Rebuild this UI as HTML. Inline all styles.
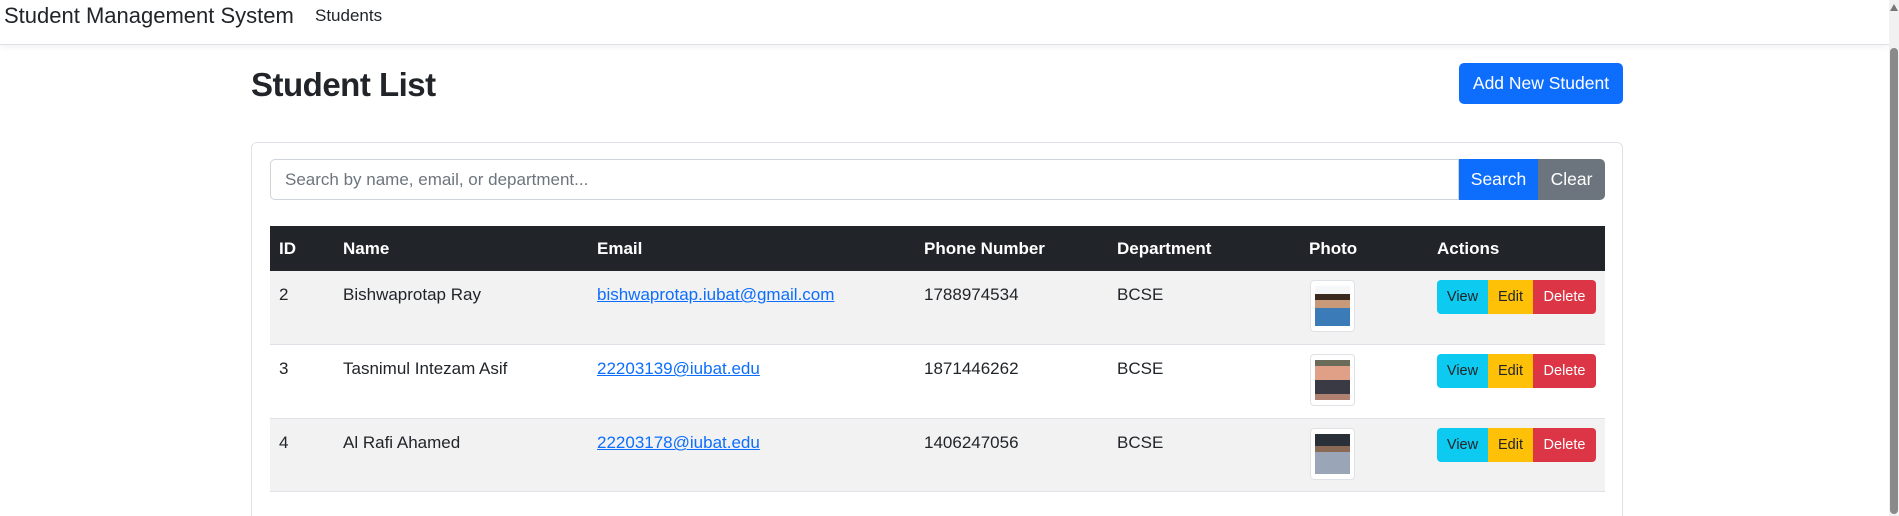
<!DOCTYPE html>
<html><head><meta charset="utf-8"><style>
*{box-sizing:border-box;margin:0;padding:0}
html{width:1899px;height:516px;overflow:hidden}
body{width:1899px;height:516px;overflow:hidden;background:#fff;font-family:"Liberation Sans",sans-serif;color:#212529;position:relative}
.nav{position:absolute;left:0;top:0;width:1889px;height:45px;border-bottom:1px solid #dee2e6;box-shadow:0 2px 6px rgba(0,0,0,.06)}
.brand{position:absolute;left:4px;top:3px;font-size:22px}
.link{position:absolute;left:315px;top:6px;font-size:17px}
h1{position:absolute;left:251px;top:66px;font-size:33px;font-weight:bold;letter-spacing:-0.5px}
.add{position:absolute;left:1459px;top:63px;width:164px;height:41px;background:#0d6efd;color:#fff;border-radius:5px;font-size:17.5px;text-align:center;line-height:41px}
.card{position:absolute;left:251px;top:142px;width:1372px;height:374px;border:1px solid #dee2e6;border-bottom:none;border-radius:6px 6px 0 0}
.inp{position:absolute;left:270px;top:159px;width:1189px;height:41px;border:1px solid #ced4da;border-radius:5px 0 0 5px;font-size:17px;color:#6c757d;padding-left:14px;line-height:39px}
.sb{position:absolute;top:159px;height:41px;color:#fff;font-size:17.5px;text-align:center;line-height:41px}
.thead{position:absolute;left:270px;top:226px;width:1335px;height:45px;background:#212529;color:#fff;font-weight:bold;font-size:17px}
.row{position:absolute;left:270px;width:1335px;border-bottom:1px solid #dee2e6;font-size:17px}
.c{position:absolute;top:14px}
.thead .c{top:13px}
a{color:#0d6efd;text-decoration:underline}
.ph{position:absolute;left:1040px;top:9px;width:45px;height:52px;border:1px solid #dee2e6;border-radius:4px;background:#fff;padding:5px 4px}
.ph div{width:100%;height:100%}
.btn{position:absolute;top:9px;height:34px;line-height:34px;font-size:14.5px;text-align:center}
.scroll{position:absolute;right:0;top:0;width:10px;height:516px;background:#f1f1f1}
.scroll .t{position:absolute;left:1px;top:48px;width:8px;height:466px;background:#8a8a8a;border-radius:4px}
</style></head><body>
<div class="nav"><span class="brand">Student Management System</span><span class="link">Students</span></div>
<h1>Student List</h1>
<div class="add">Add New Student</div>
<div class="card"></div>
<div class="inp">Search by name, email, or department...</div>
<div class="sb" style="left:1459px;width:79px;background:#0d6efd">Search</div>
<div class="sb" style="left:1538px;width:67px;background:#6c757d;border-radius:0 5px 5px 0">Clear</div>
<div class="thead"><span class="c" style="left:9px">ID</span><span class="c" style="left:73px">Name</span><span class="c" style="left:327px">Email</span><span class="c" style="left:654px">Phone Number</span><span class="c" style="left:847px">Department</span><span class="c" style="left:1039px">Photo</span><span class="c" style="left:1167px">Actions</span></div>

<div class="row" style="top:271px;height:74px;background:#f2f2f2"><span class="c" style="left:9px">2</span><span class="c" style="left:73px">Bishwaprotap Ray</span><span class="c" style="left:327px"><a>bishwaprotap.iubat@gmail.com</a></span><span class="c" style="left:654px">1788974534</span><span class="c" style="left:847px">BCSE</span>
<div class="ph"><div style="background:linear-gradient(#f5f7f8 0 20%,#3a2a20 20% 35%,#c99a7a 35% 55%,#3b7bb8 55%)"></div></div>
<div class="btn" style="left:1167px;width:51px;background:#0dcaf0;border-radius:4px 0 0 4px">View</div><div class="btn" style="left:1218px;width:45px;background:#ffc107">Edit</div><div class="btn" style="left:1263px;width:63px;background:#dc3545;color:#fff;border-radius:0 4px 4px 0">Delete</div></div>

<div class="row" style="top:345px;height:74px"><span class="c" style="left:9px">3</span><span class="c" style="left:73px">Tasnimul Intezam Asif</span><span class="c" style="left:327px"><a>22203139@iubat.edu</a></span><span class="c" style="left:654px">1871446262</span><span class="c" style="left:847px">BCSE</span>
<div class="ph"><div style="background:linear-gradient(#6b6b5a 0 15%,#e0a088 15% 50%,#3a3a45 50% 85%,#b08070 85%)"></div></div>
<div class="btn" style="left:1167px;width:51px;background:#0dcaf0;border-radius:4px 0 0 4px">View</div><div class="btn" style="left:1218px;width:45px;background:#ffc107">Edit</div><div class="btn" style="left:1263px;width:63px;background:#dc3545;color:#fff;border-radius:0 4px 4px 0">Delete</div></div>

<div class="row" style="top:419px;height:73px;background:#f2f2f2"><span class="c" style="left:9px">4</span><span class="c" style="left:73px">Al Rafi Ahamed</span><span class="c" style="left:327px"><a>22203178@iubat.edu</a></span><span class="c" style="left:654px">1406247056</span><span class="c" style="left:847px">BCSE</span>
<div class="ph"><div style="background:linear-gradient(#2a3038 0 30%,#8a6a55 30% 45%,#9aa5b8 45%)"></div></div>
<div class="btn" style="left:1167px;width:51px;background:#0dcaf0;border-radius:4px 0 0 4px">View</div><div class="btn" style="left:1218px;width:45px;background:#ffc107">Edit</div><div class="btn" style="left:1263px;width:63px;background:#dc3545;color:#fff;border-radius:0 4px 4px 0">Delete</div></div>

<div class="scroll"><div style="position:absolute;left:1px;top:4px;width:0;height:0;border-left:4px solid transparent;border-right:4px solid transparent;border-bottom:7px solid #777"></div><div class="t"></div></div>
</body></html>
